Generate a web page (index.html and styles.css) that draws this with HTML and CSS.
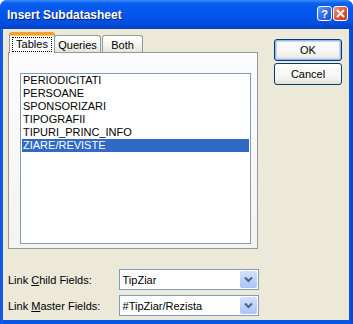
FILE: index.html
```html
<!DOCTYPE html>
<html lang="en">
<head>
    <meta charset="UTF-8">
    <title>Insert Subdatasheet</title>
    <link rel="stylesheet" href="styles.css">
</head>
<body>
    <div class="window">
        <div class="titlebar">
            <span class="title">Insert Subdatasheet</span>
            <div class="caption-btns">
                <span class="cap help">?</span>
                <span class="cap close">
                    <svg width="9" height="9" viewBox="0 0 9 9"><path d="M1 1 L8 8 M8 1 L1 8" stroke="#fff" stroke-width="2"/></svg>
                </span>
            </div>
        </div>
        <div class="client">
            <div class="main">
                <div class="tabs">
                    <div class="tab active"><span class="focus">Tables</span></div>
                    <div class="tab queries">Queries</div>
                    <div class="tab both">Both</div>
                </div>
                <div class="pane">
                    <ul class="listbox">
                        <li>PERIODICITATI</li>
                        <li>PERSOANE</li>
                        <li>SPONSORIZARI</li>
                        <li>TIPOGRAFII</li>
                        <li>TIPURI_PRINC_INFO</li>
                        <li class="selected">ZIARE/REVISTE</li>
                    </ul>
                </div>
                <div class="field first">
                    <label>Link <u>C</u>hild Fields:</label>
                    <div class="combo">
                        <span class="value">TipZiar</span>
                        <span class="drop"><svg width="9" height="7" viewBox="0 0 9 7"><path d="M1 1.5 L4.5 5 L8 1.5" fill="none" stroke="#4d6185" stroke-width="2"/></svg></span>
                    </div>
                </div>
                <div class="field">
                    <label>Link <u>M</u>aster Fields:</label>
                    <div class="combo">
                        <span class="value">#TipZiar/Rezista</span>
                        <span class="drop"><svg width="9" height="7" viewBox="0 0 9 7"><path d="M1 1.5 L4.5 5 L8 1.5" fill="none" stroke="#4d6185" stroke-width="2"/></svg></span>
                    </div>
                </div>
            </div>
            <div class="buttons">
                <button class="btn default">OK</button>
                <button class="btn">Cancel</button>
            </div>
        </div>
    </div>
</body>
</html>
```
FILE: styles.css
```css
body {
    margin: 0;
    background: #fff;
    font-family: "Liberation Sans", Arial, sans-serif;
    font-size: 11px;
    color: #000;
}
.window {
    width: 353px;
    height: 324px;
    display: flex;
    flex-direction: column;
    background: linear-gradient(to right, #0840c8 0, #1a66f0 1px, #0a56e4 3px, #0a56e4 349px, #0845d0 352px);
    border-radius: 7px 7px 0 0;
    overflow: hidden;
}
.titlebar {
    height: 29px;
    flex: none;
    display: flex;
    align-items: center;
    justify-content: space-between;
    padding: 0 5px 0 7px;
    background: linear-gradient(#3e8dfc 0, #0a62f0 3px, #0559ee 8px, #0255ea 18px, #0049d6 26px, #0040c4 29px);
}
.title {
    color: #fff;
    font-weight: bold;
    font-size: 12px;
    text-shadow: 1px 1px 0 #0a1e6c;
    margin-top: 1px;
}
.caption-btns {
    display: flex;
    gap: 1px;
    margin-top: -2px;
}
.cap {
    width: 13px;
    height: 13px;
    border: 1px solid #fff;
    border-radius: 3px;
    display: flex;
    align-items: center;
    justify-content: center;
    color: #fff;
    font-weight: bold;
    font-size: 11px;
}
.help {
    background: linear-gradient(135deg, #6c9bf8, #2a64e6 60%, #1e4fd0);
}
.close {
    background: linear-gradient(135deg, #f0977a, #e0552e 50%, #c8401c);
}
.client {
    flex: 1;
    margin: 0 4px 4px 3px;
    background: #ece9d8;
    display: flex;
    padding: 3px 0 0 5px;
}
.main {
    width: 251px;
}
.tabs {
    height: 20px;
    display: flex;
    align-items: flex-end;
    padding-left: 1px;
    position: relative;
    z-index: 1;
}
.tab {
    box-sizing: border-box;
    height: 17px;
    border: 1px solid #919b9c;
    border-bottom: none;
    border-radius: 3px 3px 0 0;
    background: linear-gradient(#fff, #f3f3ef 60%, #e4e3dc);
    display: flex;
    align-items: center;
    justify-content: center;
    padding-top: 1px;
}
.tab.active {
    width: 46px;
    height: 21px;
    margin-bottom: -1px;
    background: #fcfcfe;
    border-top: 3px solid #f2a03a;
    border-radius: 3px 3px 0 0;
    box-shadow: inset 0 1px 0 #ffc94f;
    padding-top: 0;
}
.focus {
    border: 1px dotted #000;
    padding: 0 3px;
    line-height: 13px;
}
.queries {
    width: 47px;
    margin-left: -1px;
}
.both {
    width: 41px;
    margin-left: 1px;
}
.pane {
    box-sizing: border-box;
    width: 250px;
    height: 197px;
    border: 1px solid #919b9c;
    background: linear-gradient(#fcfcfe, #f4f3ee);
    padding: 20px 0 0 11px;
}
.listbox {
    box-sizing: border-box;
    width: 231px;
    height: 171px;
    margin: 0;
    padding: 0 1px;
    list-style: none;
    background: #fff;
    border: 1px solid #7f9db9;
}
.listbox li {
    height: 13px;
    line-height: 13px;
    padding-left: 1px;
}
.listbox li.selected {
    background: #316ac5;
    color: #fff;
}
.field {
    display: flex;
    align-items: center;
    height: 21px;
    margin-top: 5px;
}
.field.first {
    margin-top: 20px;
}
.field label {
    width: 111px;
}
.combo {
    box-sizing: border-box;
    width: 141px;
    height: 21px;
    border: 1px solid #7f9db9;
    background: #fff;
    display: flex;
    align-items: center;
}
.value {
    flex: 1;
    padding-left: 3px;
}
.drop {
    width: 17px;
    height: 17px;
    margin-right: 1px;
    border-radius: 2px;
    background: linear-gradient(#d4e1fd, #bccffa 60%, #aec3f5);
    display: flex;
    align-items: center;
    justify-content: center;
}
.buttons {
    margin-left: 15px;
    margin-top: 7px;
    display: flex;
    flex-direction: column;
    gap: 2px;
}
.btn {
    box-sizing: border-box;
    width: 68px;
    height: 22px;
    border: 1px solid #003c74;
    border-radius: 3px;
    background: linear-gradient(#fff, #f4f3ef 70%, #e3e0d5);
    font-family: "Liberation Sans", Arial, sans-serif;
    font-size: 11px;
    color: #000;
    padding: 0;
}
.btn.default {
    box-shadow: inset 0 0 0 1px #9bb7f1, inset 0 0 0 2px #c7d8f9;
}
```
